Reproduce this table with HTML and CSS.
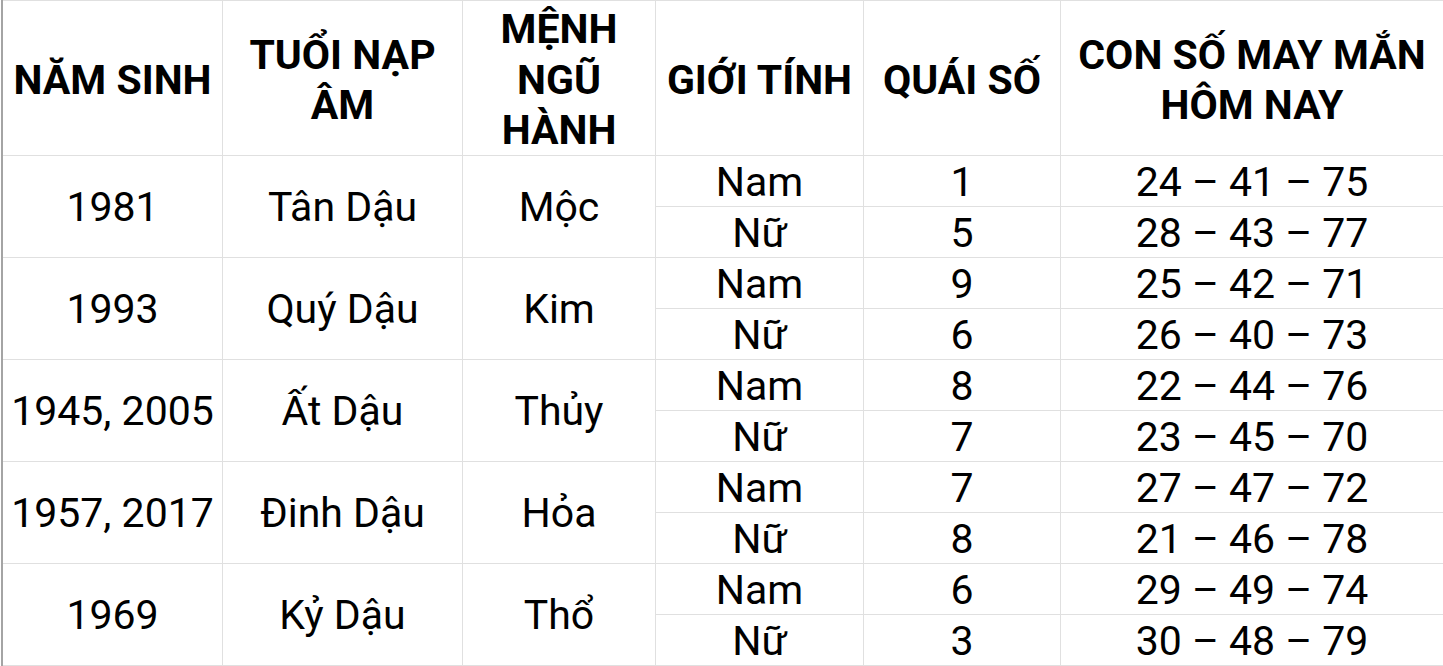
FILE: index.html
```html
<!DOCTYPE html>
<html lang="vi">
<head>
<meta charset="utf-8">
<title>Con số may mắn tuổi Dậu</title>
<link rel="stylesheet" href="styles.css">
</head>
<body>
<div class="sheet">
  <div class="cell head">NĂM SINH</div>
  <div class="cell head">TUỔI NẠP<br>ÂM</div>
  <div class="cell head">MỆNH<br>NGŨ<br>HÀNH</div>
  <div class="cell head">GIỚI TÍNH</div>
  <div class="cell head">QUÁI SỐ</div>
  <div class="cell head">CON SỐ MAY MẮN<br>HÔM NAY</div>

  <div class="cell span2">1981</div>
  <div class="cell span2">Tân Dậu</div>
  <div class="cell span2">Mộc</div>
  <div class="cell">Nam</div>
  <div class="cell">1</div>
  <div class="cell">24 – 41 – 75</div>
  <div class="cell">Nữ</div>
  <div class="cell">5</div>
  <div class="cell">28 – 43 – 77</div>

  <div class="cell span2">1993</div>
  <div class="cell span2">Quý Dậu</div>
  <div class="cell span2">Kim</div>
  <div class="cell">Nam</div>
  <div class="cell">9</div>
  <div class="cell">25 – 42 – 71</div>
  <div class="cell">Nữ</div>
  <div class="cell">6</div>
  <div class="cell">26 – 40 – 73</div>

  <div class="cell span2">1945, 2005</div>
  <div class="cell span2">Ất Dậu</div>
  <div class="cell span2">Thủy</div>
  <div class="cell">Nam</div>
  <div class="cell">8</div>
  <div class="cell">22 – 44 – 76</div>
  <div class="cell">Nữ</div>
  <div class="cell">7</div>
  <div class="cell">23 – 45 – 70</div>

  <div class="cell span2">1957, 2017</div>
  <div class="cell span2">Đinh Dậu</div>
  <div class="cell span2">Hỏa</div>
  <div class="cell">Nam</div>
  <div class="cell">7</div>
  <div class="cell">27 – 47 – 72</div>
  <div class="cell">Nữ</div>
  <div class="cell">8</div>
  <div class="cell">21 – 46 – 78</div>

  <div class="cell span2">1969</div>
  <div class="cell span2">Kỷ Dậu</div>
  <div class="cell span2">Thổ</div>
  <div class="cell">Nam</div>
  <div class="cell">6</div>
  <div class="cell">29 – 49 – 74</div>
  <div class="cell">Nữ</div>
  <div class="cell">3</div>
  <div class="cell">30 – 48 – 79</div>
</div>
</body>
</html>
```
FILE: styles.css
```css
html, body {
  margin: 0;
  padding: 0;
  background: #ffffff;
  overflow: hidden;
}

.sheet {
  margin-left: 1px;
  display: grid;
  grid-template-columns: 219px 239px 192px 207px 196px 382px;
  grid-template-rows: 154px repeat(10, 50px);
  gap: 1px;
  padding: 1px 0;
  background: #e0e0e0;
  border-left: 2px solid #a4a4a4;
  font-family: Roboto, "Noto Sans", "Liberation Sans", sans-serif;
  font-size: 41px;
  color: #000000;
}

.cell {
  background: #ffffff;
  display: flex;
  align-items: center;
  justify-content: center;
  text-align: center;
  white-space: nowrap;
  line-height: 1;
  padding-top: 2px;
  box-sizing: border-box;
}

.head {
  font-weight: 700;
  line-height: 50.5px;
  padding-top: 4px;
}

.span2 {
  grid-row: span 2;
}
```
